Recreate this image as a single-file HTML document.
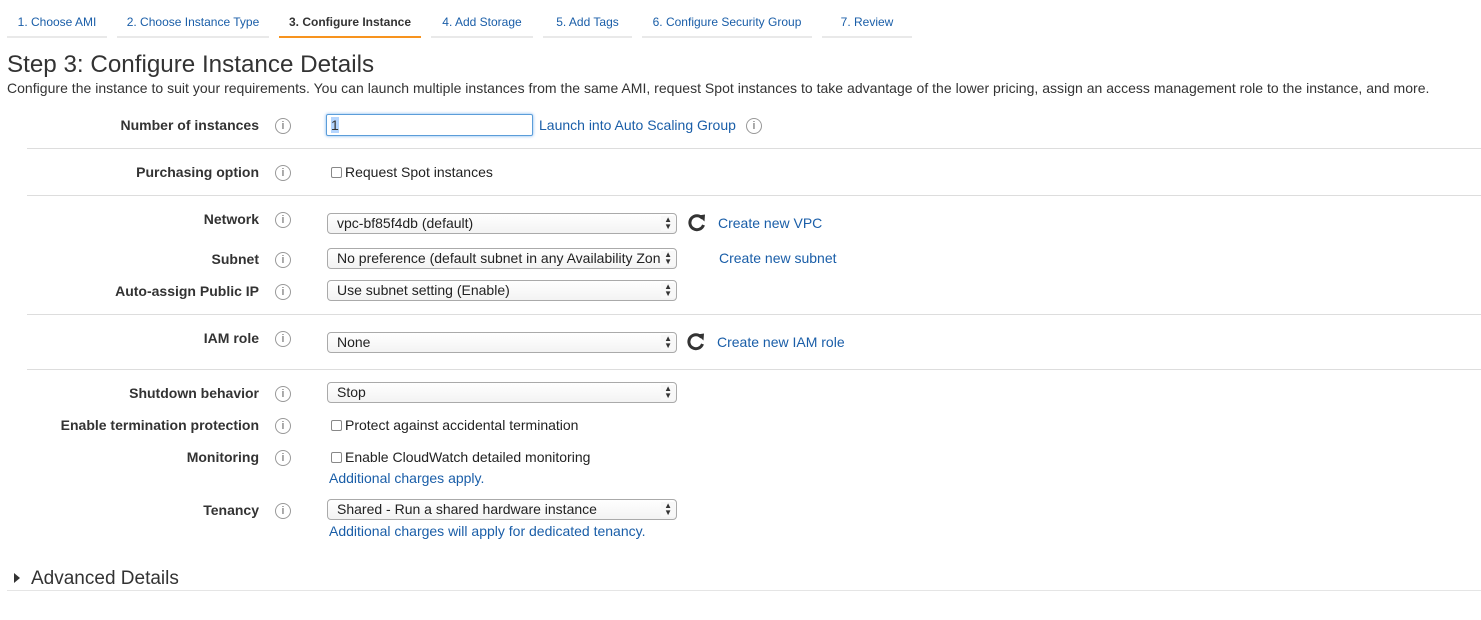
<!DOCTYPE html>
<html><head><meta charset="utf-8"><style>
*{margin:0;padding:0;box-sizing:border-box}
body{width:1481px;height:620px;background:#fff;font-family:"Liberation Sans",Arial,sans-serif;color:#333;position:relative;overflow:hidden}
.a{position:absolute;white-space:nowrap}
.tab{position:absolute;top:0;height:38px;border-bottom:2px solid #e9e9e9;font-size:12px;color:#1a5ea8;text-align:center;line-height:44px}
.tab.on{border-bottom:2px solid #f7931e;color:#333;font-weight:bold}
.lbl{position:absolute;right:1222px;font-size:14px;font-weight:bold;color:#333;white-space:nowrap}
.i{position:absolute;left:275px;width:16px;height:16px;border:1px solid #999;border-radius:50%;font-size:11px;color:#555;text-align:center;line-height:14px;font-family:"Liberation Sans",sans-serif}
.sel{position:absolute;left:327px;width:350px;height:21px;border:1px solid #aaa;border-radius:4px;background:linear-gradient(#fff,#f3f3f3);font-size:14px;line-height:19px;padding-left:9px;color:#222;overflow:hidden;white-space:nowrap}
.sel:after{content:"";position:absolute;right:1px;top:2px;width:14px;height:15px;background:#f8f8f8}
.sel i{position:absolute;right:4px;top:2px;font-style:normal;font-size:8px;line-height:7px;color:#333;z-index:2}
.hr{position:absolute;left:27px;right:0;height:1px;background:#ddd}
.lk{position:absolute;color:#1a5ea8;font-size:14px;white-space:nowrap}
.cb{position:absolute;left:331px;width:11px;height:11px;border:1px solid #888;border-radius:2px;background:#fff}
.tx{position:absolute;font-size:14px;color:#222;white-space:nowrap}
.rf{position:absolute;width:20px;height:20px}
</style></head><body>
<div class="tab" style="left:7px;width:100px">1. Choose AMI</div>
<div class="tab" style="left:117px;width:152px">2. Choose Instance Type</div>
<div class="tab on" style="left:279px;width:142px">3. Configure Instance</div>
<div class="tab" style="left:431px;width:102px">4. Add Storage</div>
<div class="tab" style="left:543px;width:89px">5. Add Tags</div>
<div class="tab" style="left:642px;width:170px">6. Configure Security Group</div>
<div class="tab" style="left:822px;width:90px">7. Review</div>

<div class="a" style="left:7px;top:51px;font-size:24.2px;color:#333">Step 3: Configure Instance Details</div>
<div class="a" style="left:7px;top:80px;font-size:14px;letter-spacing:0.02px;color:#333">Configure the instance to suit your requirements. You can launch multiple instances from the same AMI, request Spot instances to take advantage of the lower pricing, assign an access management role to the instance, and more.</div>

<div class="lbl" style="top:117px">Number of instances</div><div class="i" style="top:118px">i</div>
<div class="a" style="left:326px;top:114px;width:207px;height:22px;border:1px solid #5b9dd9;box-shadow:0 0 3px #7ab3f0;border-radius:2px;font-size:14px;padding-left:4px;line-height:20px"><span style="background:#b4d5fe">1</span></div>
<div class="lk" style="left:539px;top:117px">Launch into Auto Scaling Group</div><div class="i" style="left:746px;top:118px">i</div>
<div class="hr" style="top:148px"></div>

<div class="lbl" style="top:164px">Purchasing option</div><div class="i" style="top:165px">i</div>
<div class="cb" style="top:167px"></div><div class="tx" style="left:345px;top:164px">Request Spot instances</div>
<div class="hr" style="top:195px"></div>

<div class="lbl" style="top:211px">Network</div><div class="i" style="top:212px">i</div>
<div class="sel" style="top:213px">vpc-bf85f4db (default)<i>▲<br>▼</i></div>
<svg class="rf" style="left:687px;top:212px" viewBox="0 0 20 20"><path d="M15.5 6.5A7 7 0 1 0 16.5 13" fill="none" stroke="#333" stroke-width="3"/><path d="M11 3.5L18 2.5 17.5 9.5Z" fill="#333"/></svg>
<div class="lk" style="left:718px;top:215px">Create new VPC</div>

<div class="lbl" style="top:251px">Subnet</div><div class="i" style="top:252px">i</div>
<div class="sel" style="top:248px">No preference (default subnet in any Availability Zone)<i>▲<br>▼</i></div>
<div class="lk" style="left:719px;top:250px">Create new subnet</div>

<div class="lbl" style="top:283px">Auto-assign Public IP</div><div class="i" style="top:284px">i</div>
<div class="sel" style="top:280px">Use subnet setting (Enable)<i>▲<br>▼</i></div>
<div class="hr" style="top:314px"></div>

<div class="lbl" style="top:330px">IAM role</div><div class="i" style="top:331px">i</div>
<div class="sel" style="top:332px">None<i>▲<br>▼</i></div>
<svg class="rf" style="left:686px;top:331px" viewBox="0 0 20 20"><path d="M15.5 6.5A7 7 0 1 0 16.5 13" fill="none" stroke="#333" stroke-width="3"/><path d="M11 3.5L18 2.5 17.5 9.5Z" fill="#333"/></svg>
<div class="lk" style="left:717px;top:334px">Create new IAM role</div>
<div class="hr" style="top:369px"></div>

<div class="lbl" style="top:385px">Shutdown behavior</div><div class="i" style="top:386px">i</div>
<div class="sel" style="top:382px">Stop<i>▲<br>▼</i></div>

<div class="lbl" style="top:417px">Enable termination protection</div><div class="i" style="top:418px">i</div>
<div class="cb" style="top:420px"></div><div class="tx" style="left:345px;top:417px">Protect against accidental termination</div>

<div class="lbl" style="top:449px">Monitoring</div><div class="i" style="top:450px">i</div>
<div class="cb" style="top:452px"></div><div class="tx" style="left:345px;top:449px">Enable CloudWatch detailed monitoring</div>
<div class="lk" style="left:329px;top:470px">Additional charges apply.</div>

<div class="lbl" style="top:502px">Tenancy</div><div class="i" style="top:503px">i</div>
<div class="sel" style="top:499px">Shared - Run a shared hardware instance<i>▲<br>▼</i></div>
<div class="lk" style="left:329px;top:523px">Additional charges will apply for dedicated tenancy.</div>

<svg class="a" style="left:13px;top:573px" width="8" height="10" viewBox="0 0 8 10"><path d="M1 0L7 5 1 10Z" fill="#333"/></svg>
<div class="a" style="left:31px;top:568px;font-size:19px;color:#333">Advanced Details</div>
<div class="a" style="left:7px;right:0;top:590px;height:1px;background:#e5e5e5"></div>
</body></html>
